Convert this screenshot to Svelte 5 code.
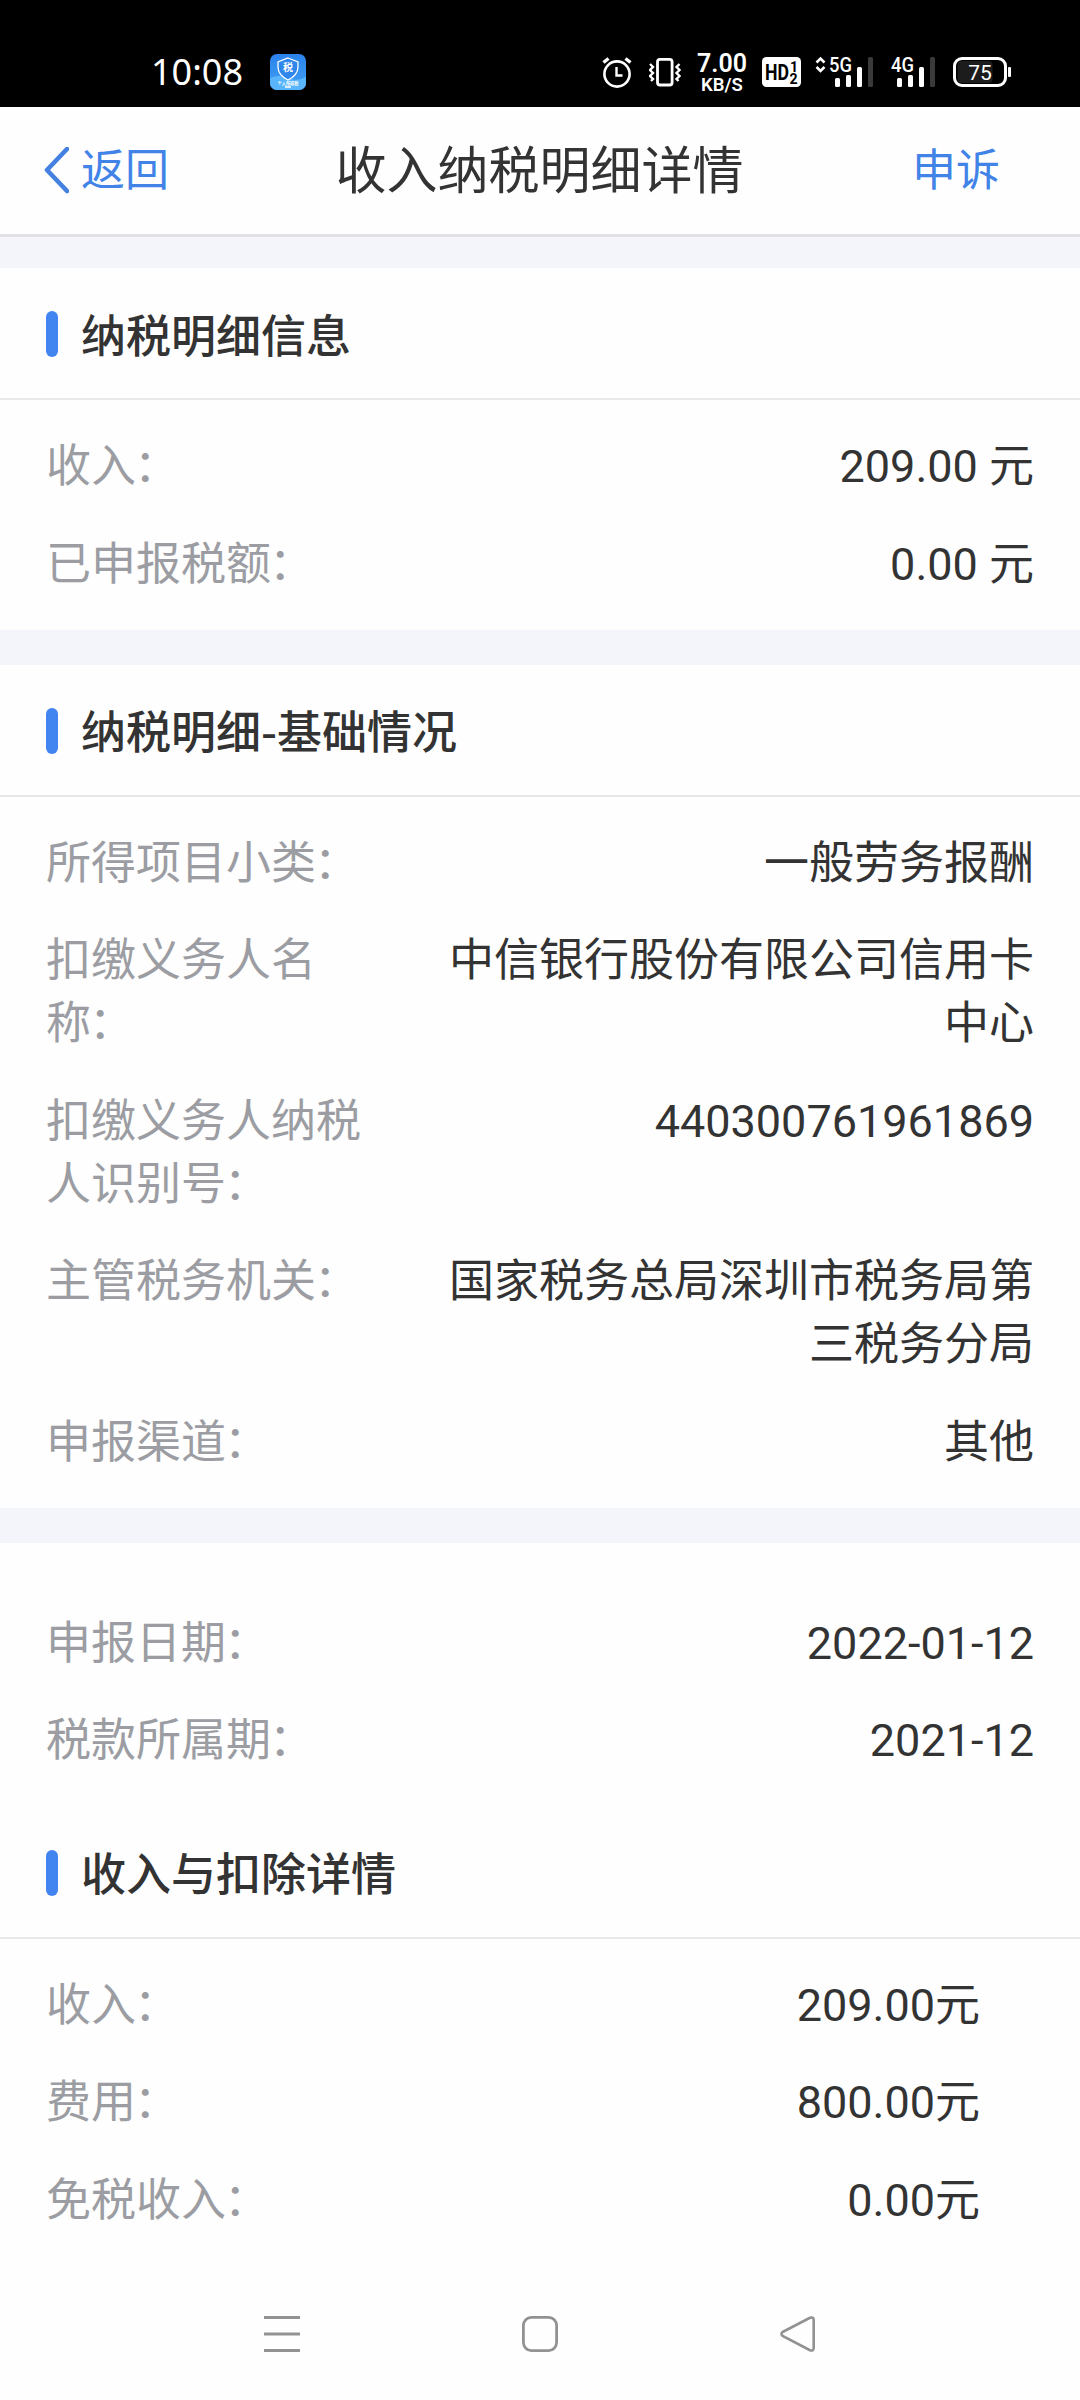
<script lang="ts">
  type Row = { label: string; value: string };

  const summary: Row[] = [
    { label: "收入", value: "209.00 元" },
    { label: "已申报税额", value: "0.00 元" },
  ];

  const basics: Row[] = [
    { label: "所得项目小类", value: "一般劳务报酬" },
    { label: "扣缴义务人名称", value: "中信银行股份有限公司信用卡中心" },
    { label: "扣缴义务人纳税人识别号", value: "440300761961869" },
    { label: "主管税务机关", value: "国家税务总局深圳市税务局第三税务分局" },
    { label: "申报渠道", value: "其他" },
  ];

  const dates: Row[] = [
    { label: "申报日期", value: "2022-01-12" },
    { label: "税款所属期", value: "2021-12" },
  ];

  const income: Row[] = [
    { label: "收入", value: "209.00元" },
    { label: "费用", value: "800.00元" },
    { label: "免税收入", value: "0.00元" },
  ];
</script>

{#snippet heading(text: string)}
  <h2 class="heading"><span class="marker"></span><span class="heading-text">{text}</span></h2>
{/snippet}

{#snippet rowList(rows: Row[], inset: boolean)}
  <dl class="rows" class:inset>
    {#each rows as row}
      <div class="row">
        <dt>{row.label}<span class="colon">：</span></dt>
        <dd>{row.value}</dd>
      </div>
    {/each}
  </dl>
{/snippet}

{#snippet signalBars()}
  <rect x="6" y="28" width="5" height="9" rx="1.5" fill="#fff" />
  <rect x="17" y="25" width="5" height="12" rx="1.5" fill="#fff" />
  <rect x="28" y="17" width="5" height="20" rx="1.5" fill="#fff" />
  <rect x="39" y="7" width="5" height="30" rx="1.5" fill="#3a3a3a" />
{/snippet}

<div class="screen">
  <div class="status-bar">
    <span class="clock">10:08</span>
    <svg class="app-icon" width="36" height="36" viewBox="0 0 36 36">
      <defs>
        <linearGradient id="sky" x1="0" y1="0" x2="0" y2="1">
          <stop offset="0" stop-color="#2b83ea" />
          <stop offset="1" stop-color="#3fa0f5" />
        </linearGradient>
      </defs>
      <rect width="36" height="36" rx="7" fill="url(#sky)" />
      <path d="M0 24q9-4 18 0t18-1v6a7 7 0 0 1-7 7H7a7 7 0 0 1-7-7z" fill="#58b4fb" />
      <path d="M18 4l10 4v5c0 6-4 10-10 13C12 23 8 19 8 13V8z" fill="#2f87ec" stroke="#fff" stroke-width="1.3" />
      <text x="18" y="16.5" text-anchor="middle" font-size="10" font-weight="700" fill="#fff">税</text>
      <text x="18" y="30.5" text-anchor="middle" font-size="4.2" font-weight="700" fill="#fff">个人所得税</text>
      <path d="M15 33h6" stroke="#fff" stroke-width="1.5" />
    </svg>

    <div class="indicators">
      <svg width="30" height="44" viewBox="0 0 30 44" fill="none" stroke="#fff">
        <circle cx="15" cy="24" r="12.6" stroke-width="2.6" />
        <path d="M14.5 17v8.5h6" stroke-width="2.4" />
        <path d="M1.5 12.5l5-4M28.5 12.5l-5-4" stroke-width="3.4" />
      </svg>
      <svg class="vibrate" width="32" height="44" viewBox="0 0 32 44" fill="none" stroke="#fff">
        <rect x="8.5" y="9.4" width="14.6" height="25.6" rx="2.5" stroke-width="2.8" />
        <path d="M1 14l3 3-3 3 3 3-3 3 3 3-2 2M30.5 14l-3 3 3 3-3 3 3 3-3 3 2 2" stroke-width="2.4" />
      </svg>
      <div class="speed">
        <span class="rate">7.00</span>
        <span class="unit">KB/S</span>
      </div>
      <svg class="hd" width="40" height="44" viewBox="0 0 40 44" font-weight="700">
        <rect y="7" width="39" height="30" rx="4.5" fill="#fff" />
        <text x="3" y="30" font-size="22" textLength="24" lengthAdjust="spacingAndGlyphs">HD</text>
        <text x="28" y="21.5" font-size="14">1</text>
        <text x="27.5" y="33.5" font-size="14">2</text>
      </svg>
      <svg class="arrows" width="11" height="44" viewBox="0 0 11 44" fill="none" stroke="#fff" stroke-width="2.6">
        <path d="M1.5 12.5l4-4 4 4M1.5 17l4 4 4-4" />
      </svg>
      <svg class="signal" width="45" height="44" viewBox="0 0 45 44">
        <text x="0" y="22" font-size="21" font-weight="500" fill="#fff" textLength="23" lengthAdjust="spacingAndGlyphs">5G</text>
        {@render signalBars()}
      </svg>
      <svg class="signal second" width="45" height="44" viewBox="0 0 45 44">
        <text x="0" y="22" font-size="21" font-weight="500" fill="#fff" textLength="23" lengthAdjust="spacingAndGlyphs">4G</text>
        {@render signalBars()}
      </svg>
      <svg class="battery" width="59" height="44" viewBox="0 0 59 44">
        <rect x="1.5" y="8.5" width="51" height="27" rx="7.5" fill="none" stroke="#fff" stroke-width="3" />
        <rect x="4.5" y="11" width="35" height="22" rx="4" fill="#1c1c1c" />
        <rect x="55" y="17" width="3" height="10" rx="1" fill="#fff" />
        <text x="27" y="29.5" text-anchor="middle" font-size="21" fill="#fff">75</text>
      </svg>
    </div>
  </div>

  <header class="nav-bar">
    <button class="back" type="button">
      <svg width="26" height="48" viewBox="0 0 26 48" fill="none">
        <path d="M24 2L4 23l20 21" stroke="#4581e0" stroke-width="4.6" stroke-linecap="round" stroke-linejoin="round" />
      </svg>
      返回
    </button>
    <h1>收入纳税明细详情</h1>
    <button class="appeal" type="button">申诉</button>
  </header>

  <main>
    <section>
      {@render heading("纳税明细信息")}
      {@render rowList(summary, false)}
    </section>
    <section>
      {@render heading("纳税明细-基础情况")}
      {@render rowList(basics, false)}
    </section>
    <section class="last">
      {@render rowList(dates, false)}
      {@render heading("收入与扣除详情")}
      {@render rowList(income, true)}
    </section>
  </main>

  <footer class="system-nav">
    <svg width="36" height="36" viewBox="0 0 36 36" stroke="#929292" stroke-width="3">
      <path d="M0 1.5h36M0 18h36M0 34.5h36" />
    </svg>
    <svg width="36" height="36" viewBox="0 0 36 36" fill="none" stroke="#929292" stroke-width="2.8">
      <rect x="1.4" y="1.4" width="33.2" height="33.2" rx="8" />
    </svg>
    <svg width="36" height="36" viewBox="0 0 36 36" fill="none" stroke="#929292" stroke-width="2.6">
      <path d="M2.6 16L30 1.8Q33.5 0.5 33.7 4V32Q33.5 35.5 30 34.2L2.6 20Q0.3 18 2.6 16z" />
    </svg>
  </footer>
</div>

<style>
  :global(body) {
    margin: 0;
    background: #fff;
  }

  .screen {
    display: flex;
    flex-direction: column;
    width: 1080px;
    height: 2400px;
    overflow: hidden;
    background: #fefefe;
    color: #333;
    font-family: Roboto, "Noto Sans CJK SC", sans-serif;
    font-size: 45px;
    line-height: 63px;
  }

  .status-bar {
    display: flex;
    align-items: center;
    flex: none;
    box-sizing: border-box;
    height: 107px;
    padding: 37px 68px 0 151px;
    background: #000;
    color: #fff;
    font-family: "Noto Sans", "Noto Sans CJK SC", sans-serif;
  }

  .clock {
    width: 119px;
    font-size: 36px;
    line-height: 44px;
  }

  .app-icon {
    font-family: "Noto Sans CJK SC", sans-serif;
  }

  .indicators {
    display: flex;
    margin-left: auto;
    font-family: Roboto, sans-serif;
  }

  .vibrate {
    margin-left: 17px;
  }

  .speed {
    display: flex;
    flex-direction: column;
    align-items: center;
    width: 50px;
    margin-left: 16px;
    font-weight: 600;
  }

  .rate {
    font-size: 25px;
    line-height: 27px;
  }

  .unit {
    font-size: 18.5px;
    line-height: 16px;
  }

  .hd {
    margin-left: 15px;
  }

  .arrows {
    margin-left: 13px;
  }

  .signal {
    margin-left: 3px;
  }

  .signal.second {
    margin-left: 17px;
  }

  .battery {
    margin-left: 17px;
  }

  .nav-bar {
    display: grid;
    grid-template-columns: 1fr auto 1fr;
    align-items: center;
    flex: none;
    box-sizing: border-box;
    height: 130px;
    padding: 1px 80px 0 43px;
    border-bottom: 3px solid #e0e0e5;
  }

  h1 {
    margin: 0 0 0 36px;
    font-size: 51px;
    font-weight: 400;
  }

  button {
    padding: 0;
    border: 0;
    background: none;
    color: #4283e8;
    font: inherit;
    font-size: 44px;
  }

  .back {
    display: flex;
    align-items: center;
    gap: 12px;
  }

  .appeal {
    justify-self: end;
  }

  main {
    display: flex;
    flex-direction: column;
    flex: 1;
    gap: 34.5px;
    padding-top: 31px;
    background: #f4f5fa;
  }

  section {
    background: #fefefe;
  }

  .last {
    flex: 1;
    padding-top: 34px;
  }

  .heading {
    display: flex;
    align-items: center;
    box-sizing: border-box;
    height: 132px;
    margin: 0;
    padding-top: 2px;
    padding-left: 46px;
    border-bottom: 2px solid #e8e8e8;
    font-family: "Noto Sans CJK SC", sans-serif;
    font-size: 45px;
    font-weight: 500;
  }

  .heading-text {
    padding-bottom: 2px;
  }

  .marker {
    width: 12px;
    height: 46px;
    margin-right: 23px;
    border-radius: 6px;
    background: #4285f0;
  }

  .rows {
    display: flex;
    flex-direction: column;
    gap: 34.5px;
    margin: 0;
    padding: 35px 46px 34.5px;
  }

  .rows.inset {
    padding-right: 100px;
  }

  .row {
    display: flex;
    justify-content: space-between;
  }

  dt {
    width: 330px;
    color: #9b9da3;
  }

  .colon {
    margin-left: -2px;
  }

  dd {
    width: 600px;
    margin: 0;
    text-align: right;
  }

  .system-nav {
    display: flex;
    align-items: center;
    justify-content: space-between;
    flex: none;
    box-sizing: border-box;
    height: 132px;
    padding: 0 264px;
  }
</style>
